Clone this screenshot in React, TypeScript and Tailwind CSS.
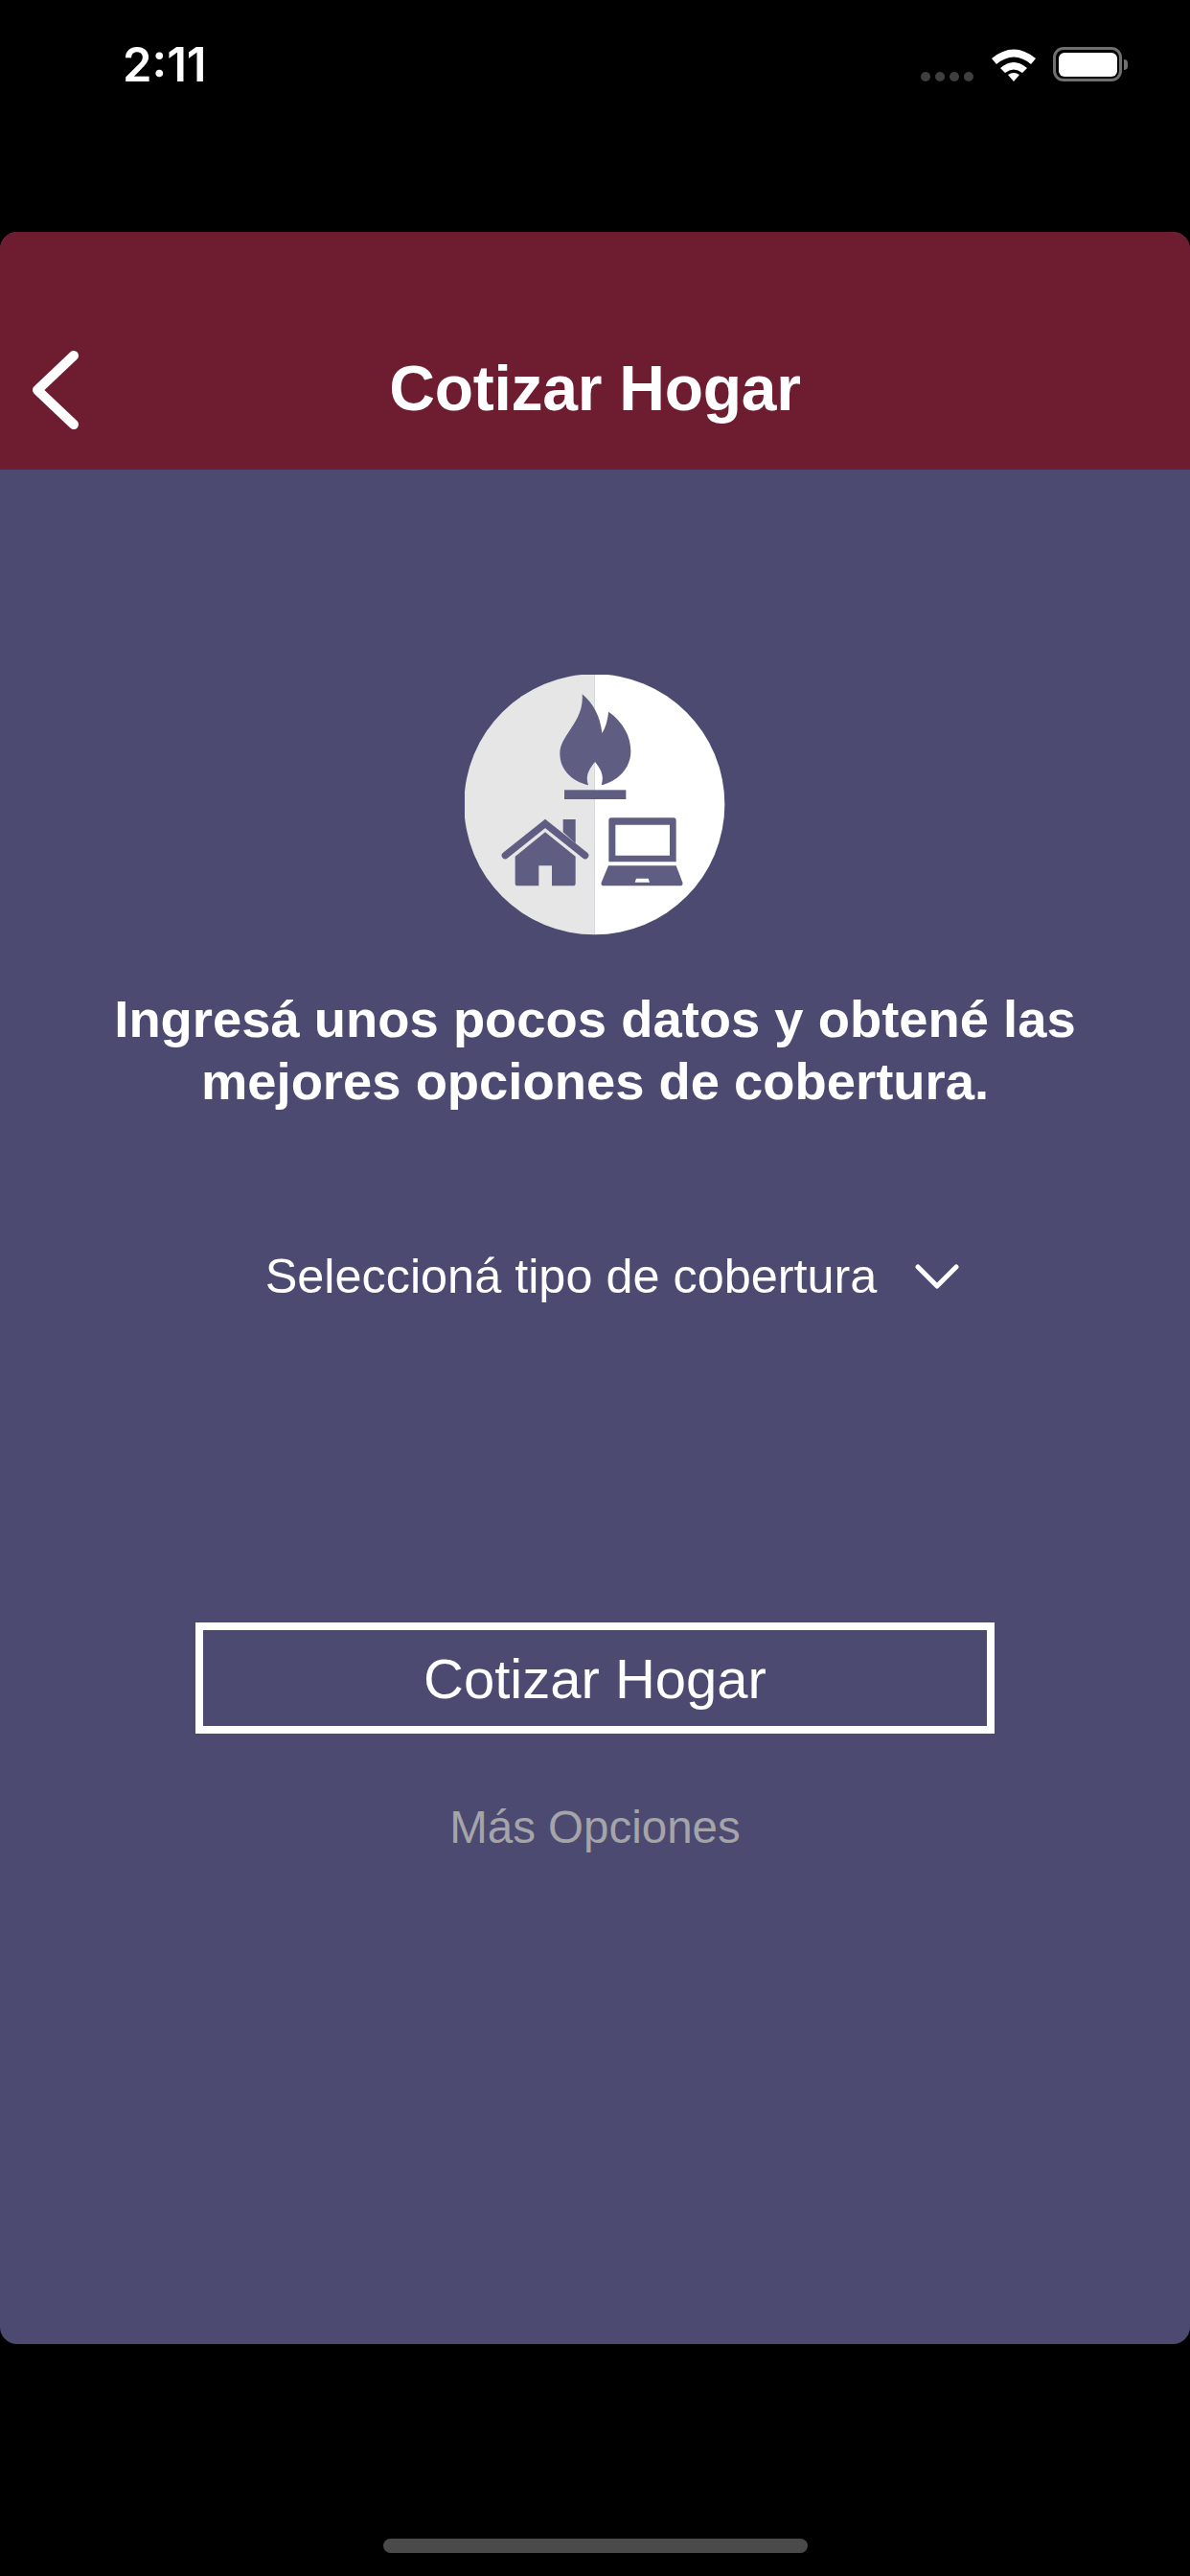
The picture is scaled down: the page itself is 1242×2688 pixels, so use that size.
const sans = "font-['Liberation_Sans',Arial,sans-serif]"

function StatusBar() {
  return (
    <div className="flex h-[242px] items-start justify-between pl-[128px] pr-[65px] pt-[42px]">
      <span className="font-['Inter',sans-serif] text-[49px] font-semibold leading-[52px] text-white">2:11</span>
      <div className="flex items-center pt-[7px]">
        <div className="mt-[26px] mr-[17px] flex gap-[5px]">
          <span className="h-[10px] w-[10px] rounded-full bg-[#3f3f3f]" />
          <span className="h-[10px] w-[10px] rounded-full bg-[#3f3f3f]" />
          <span className="h-[10px] w-[10px] rounded-full bg-[#3f3f3f]" />
          <span className="h-[10px] w-[10px] rounded-full bg-[#3f3f3f]" />
        </div>
        <svg width="50" height="36" viewBox="0 0 50 36" className="mr-[16px]">
          <path d="M2 12 Q25 -7 48 12 L43 18 Q25 3 7 18 Z" fill="#fff" />
          <path d="M11 22 Q25 10 39 22 L34 27 Q25 20 16 27 Z" fill="#fff" />
          <path d="M19 29 Q25 25 31 29 L25 36 Z" fill="#fff" />
        </svg>
        <div className="flex items-center">
          <div className="flex h-[36px] w-[72px] items-center justify-center rounded-[11px] border-[3px] border-[#707070]">
            <div className="h-[25px] w-[61px] rounded-[6px] bg-white" />
          </div>
          <div className="ml-[2px] h-[11px] w-[4px] rounded-r-full bg-[#707070]" />
        </div>
      </div>
    </div>
  )
}

function CoverageIcon() {
  return (
    <svg width="272" height="272" viewBox="135 72 816 816">
      <path d="M541 70 A408 408 0 0 0 541 886 Z" fill="#e6e6e6" />
      <path d="M541 70 A408 408 0 0 1 541 886 Z" fill="#ffffff" />
      <g fill="#5f5d82">
        <path d="M503 133 C540 165 560 205 565 255 C575 240 583 215 585 188 C625 215 655 260 655 312 C655 365 615 405 563 418 C570 395 568 375 543 345 C518 375 514 395 522 418 C470 405 433 370 433 318 C433 260 510 220 503 133 Z" />
        <rect x="447" y="433" width="193" height="29" />
        <path d="M443 525 H482 V600 L443 565 Z" />
        <path d="M262 638 L387 538 L512 638" fill="none" stroke="#5f5d82" strokeWidth="22" strokeLinecap="round" strokeLinejoin="miter" />
        <path d="M387 565 L482 641 V725 Q482 733 474 733 H408 V670 H367 V733 H301 Q293 733 293 725 V641 Z" />
        <path fillRule="evenodd" d="M594 520 H789 Q797 520 797 528 V658 H586 V528 Q586 520 594 520 Z M607 542 V638 H777 V542 Z" />
        <path d="M585 670 H797 L817 722 Q820 733 808 733 H572 Q560 733 563 722 Z" />
      </g>
      <path d="M672 710 H710 L714 722 H668 Z" fill="#ffffff" />
    </svg>
  )
}

export default function App() {
  return (
    <div className={`flex h-[2688px] w-[1242px] flex-col bg-black ${sans}`}>
      <StatusBar />
      <div className="flex h-[2204px] flex-col overflow-hidden rounded-[18px] bg-[#4c4a71]">
        <header className="grid h-[248px] grid-cols-[1fr_auto_1fr] items-center bg-[#6e1c30] pt-[78px] text-white">
          <svg width="60" height="90" viewBox="0 0 60 90" className="ml-[30px] mt-[4px]">
            <path d="M47 9 L9 45 L47 81" fill="none" stroke="#fff" strokeWidth="10" strokeLinecap="round" strokeLinejoin="round" />
          </svg>
          <h1 className="text-[66px] font-bold leading-none tracking-[-0.25px]">Cotizar Hogar</h1>
          <div />
        </header>

        <main className="flex flex-col items-center text-white">
          <div className="mt-[214px]">
            <CoverageIcon />
          </div>
          <p className="mt-[55px] text-center text-[54.4px] font-bold leading-[65px]">
            Ingresá unos pocos datos y obtené las
            <br />
            mejores opciones de cobertura.
          </p>
          <div className="mt-[141px] flex items-center gap-[40px] pl-[36px]">
            <span className="text-[50.4px] leading-[60px]">Seleccioná tipo de cobertura</span>
            <svg width="46" height="28" viewBox="0 0 46 28">
              <path d="M3 4 L23 24 L43 4" fill="none" stroke="#fff" strokeWidth="5" strokeLinecap="round" strokeLinejoin="round" />
            </svg>
          </div>
          <button className="mt-[331px] flex h-[116px] w-[834px] items-center justify-center border-[8px] border-white text-[58px] text-white">
            Cotizar Hogar
          </button>
          <a className="mt-[71px] text-[47.5px] leading-[54px] text-[#a5a4a9]">Más Opciones</a>
        </main>
      </div>
      <div className="flex flex-1 justify-center pt-[203px]">
        <div className="h-[15px] w-[443px] rounded-full bg-[#4a4a4a]" />
      </div>
    </div>
  )
}
